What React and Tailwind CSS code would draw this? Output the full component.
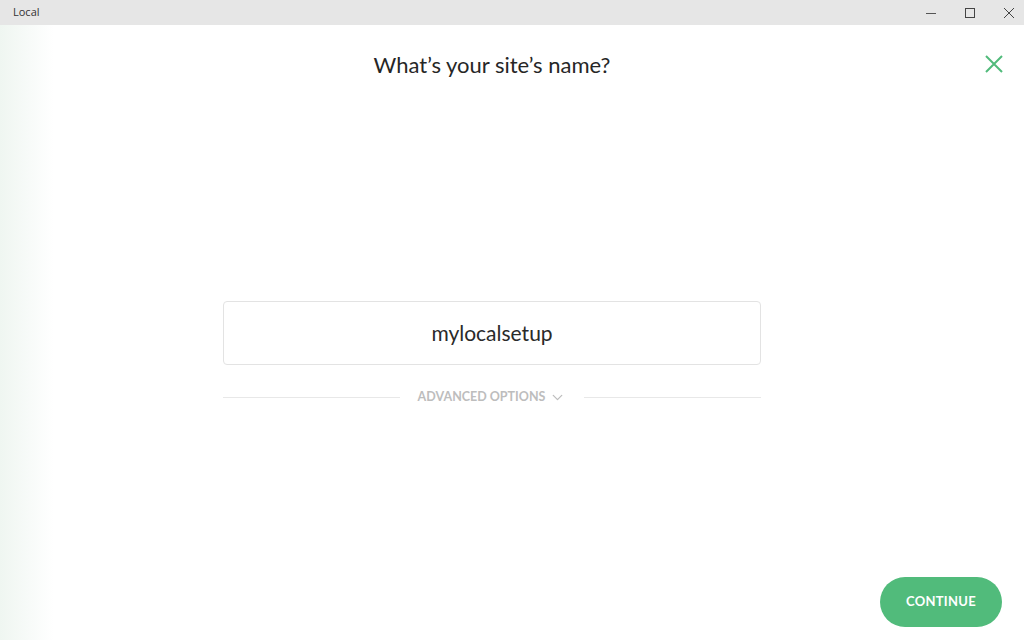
import React from 'react';
import { ChevronDown } from 'lucide-react';

const TitleBar = () => (
  <div className="h-[25px] bg-[#e6e6e6] flex items-center justify-between shrink-0">
    <span className="pl-[13px] text-[11px] text-[#333] font-['Open_Sans',sans-serif]">Local</span>
    <div className="flex items-center h-full -mr-[4px]">
      <button className="w-[39px] h-full flex items-center justify-center">
        <svg width="10" height="10" viewBox="0 0 10 10"><path d="M0 5.5h10" stroke="#555" strokeWidth="1" /></svg>
      </button>
      <button className="w-[39px] h-full flex items-center justify-center">
        <svg width="10" height="10" viewBox="0 0 10 10"><rect x="0.5" y="0.5" width="9" height="9" fill="none" stroke="#444" strokeWidth="1" /></svg>
      </button>
      <button className="w-[39px] h-full flex items-center justify-center">
        <svg width="10" height="10" viewBox="0 0 10 10"><path d="M0 0L10 10M10 0L0 10" stroke="#444" strokeWidth="1" /></svg>
      </button>
    </div>
  </div>
);

export default function App() {
  return (
    <div className="w-[1024px] h-[640px] flex flex-col overflow-hidden font-['Lato',sans-serif]">
      <TitleBar />
      <div className="flex-1 flex flex-col bg-[linear-gradient(to_right,#eff6f1_0px,#ffffff_54px)]">
        <div className="flex items-start pt-[25px]">
          <div className="w-[984px] flex justify-center">
            <h1 className="text-[22px] text-[#262626] leading-[30px]">What’s your site’s name?</h1>
          </div>
          <div className="flex-1 flex justify-end pr-[21px] pt-[5px]">
            <button>
              <svg width="18" height="18" viewBox="0 0 18 18"><path d="M1 1L17 17M17 1L1 17" stroke="#51bb7b" strokeWidth="2" /></svg>
            </button>
          </div>
        </div>

        <div className="mt-[221px] ml-[223px] w-[538px] flex flex-col">
          <div className="h-[64px] border border-[#e3e3e3] rounded-[4px] flex items-center justify-center bg-white">
            <span className="text-[21px] text-[#2a2a2a]">mylocalsetup</span>
          </div>
          <div className="mt-[23px] flex items-center">
            <div className="flex-1 h-px bg-[#e8e8e8]" />
            <button className="px-[18px] flex items-center gap-[4px] text-[12.5px] font-bold text-[#bdbdbd]">
              ADVANCED OPTIONS
              <ChevronDown size={17} strokeWidth={1.75} className="text-[#bdbdbd]" />
            </button>
            <div className="flex-1 h-px bg-[#e8e8e8]" />
          </div>
        </div>

        <div className="flex-1" />
        <div className="flex justify-end pr-[22px] pb-[13px]">
          <button className="w-[122px] h-[50px] rounded-full bg-[#51bb7b] text-white text-[13px] font-bold tracking-[0.3px]">
            CONTINUE
          </button>
        </div>
      </div>
    </div>
  );
}
